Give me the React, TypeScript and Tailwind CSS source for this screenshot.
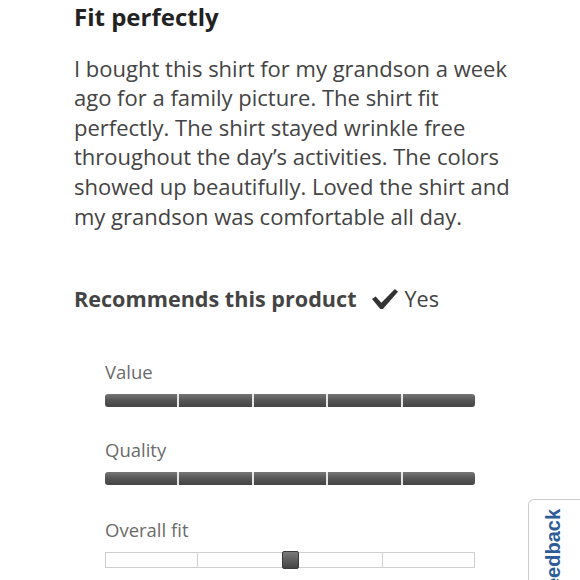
const font = { fontFamily: '"Open Sans", "Liberation Sans", sans-serif' };

const SolidBar = ({ segments }: { segments: number }) => (
    <div className="flex h-[13px] w-[370px] rounded-[3px] overflow-hidden">
        {Array.from({ length: segments }).map((_, i) => (
            <div
                key={i}
                className={`flex-1 bg-gradient-to-b from-[#767676] via-[#555555] to-[#444444] ${i > 0 ? 'border-l-2 border-[#e6e6e6]' : ''}`}
            />
        ))}
    </div>
);

const FitBar = () => (
    <div className="relative w-[370px]">
        <div className="flex h-[16px] border border-[#cfcfcf] bg-white">
            <div className="flex-1" />
            <div className="flex-1 border-l border-[#cfcfcf]" />
            <div className="flex-1 border-l border-[#cfcfcf]" />
            <div className="flex-1 border-l border-[#cfcfcf]" />
        </div>
        {/* slider thumb sits over the middle of the track */}
        <div className="absolute left-[177px] top-[-1px] h-[18px] w-[17px] rounded-[2px] border border-[#3a3a3a] bg-gradient-to-b from-[#7a7a7a] to-[#444444]" />
    </div>
);

const Rating = (props: { label: string, children: React.ReactNode, className?: string }) => (
    <div className={props.className}>
        <div className="text-[18.5px] leading-[24px] text-[#6b6b6b]">{props.label}</div>
        <div className="mt-[10.5px]">{props.children}</div>
    </div>
);

export default function App() {
    return (
        <div className="relative h-[580px] w-[580px] overflow-hidden bg-white" style={font}>
            <div className="pl-[74px] pt-[2.4px]">
                <h2 className="text-[24px] leading-[30px] font-bold text-[#222222]">Fit perfectly</h2>
                <p className="mt-[21.3px] w-[450px] text-[22px] leading-[29.6px] text-[#444444]">
                    I bought this shirt for my grandson a week ago for a family picture. The shirt fit perfectly. The shirt stayed wrinkle free throughout the day’s activities. The colors showed up beautifully. Loved the shirt and my grandson was comfortable all day.
                </p>
                <div className="mt-[52.3px] flex items-center text-[21.6px] leading-[30px] text-[#444444]">
                    <span className="font-bold">Recommends this product</span>
                    <svg className="ml-[15px] mt-[1px]" width="26" height="20" viewBox="0 0 25 19">
                        <polygon points="0,9.5 3.5,7 9,13.2 22,0 25,2.5 10.5,19 8,19" fill="#333333" />
                    </svg>
                    <span className="ml-[7px]">Yes</span>
                </div>
                <div className="pl-[31px]">
                    <Rating label="Value" className="mt-[46px]">
                        <SolidBar segments={5} />
                    </Rating>
                    <Rating label="Quality" className="mt-[30.5px]">
                        <SolidBar segments={5} />
                    </Rating>
                    <Rating label="Overall fit" className="mt-[32.5px]">
                        <FitBar />
                    </Rating>
                </div>
            </div>
            {/* feedback tab pinned to the right edge */}
            <div className="absolute left-[528px] top-[499px] h-[120px] w-[80px] rounded-tl-[6px] border border-r-0 border-b-0 border-[#cccccc] bg-white pl-[14px] pt-[9px]">
                <div
                    className="rotate-180 text-[20px] leading-[20px] font-bold text-[#2b5c98] [writing-mode:vertical-rl]"
                    style={{ fontFamily: '"Liberation Sans", Arial, sans-serif' }}
                >
                    Feedback
                </div>
            </div>
        </div>
    );
}
